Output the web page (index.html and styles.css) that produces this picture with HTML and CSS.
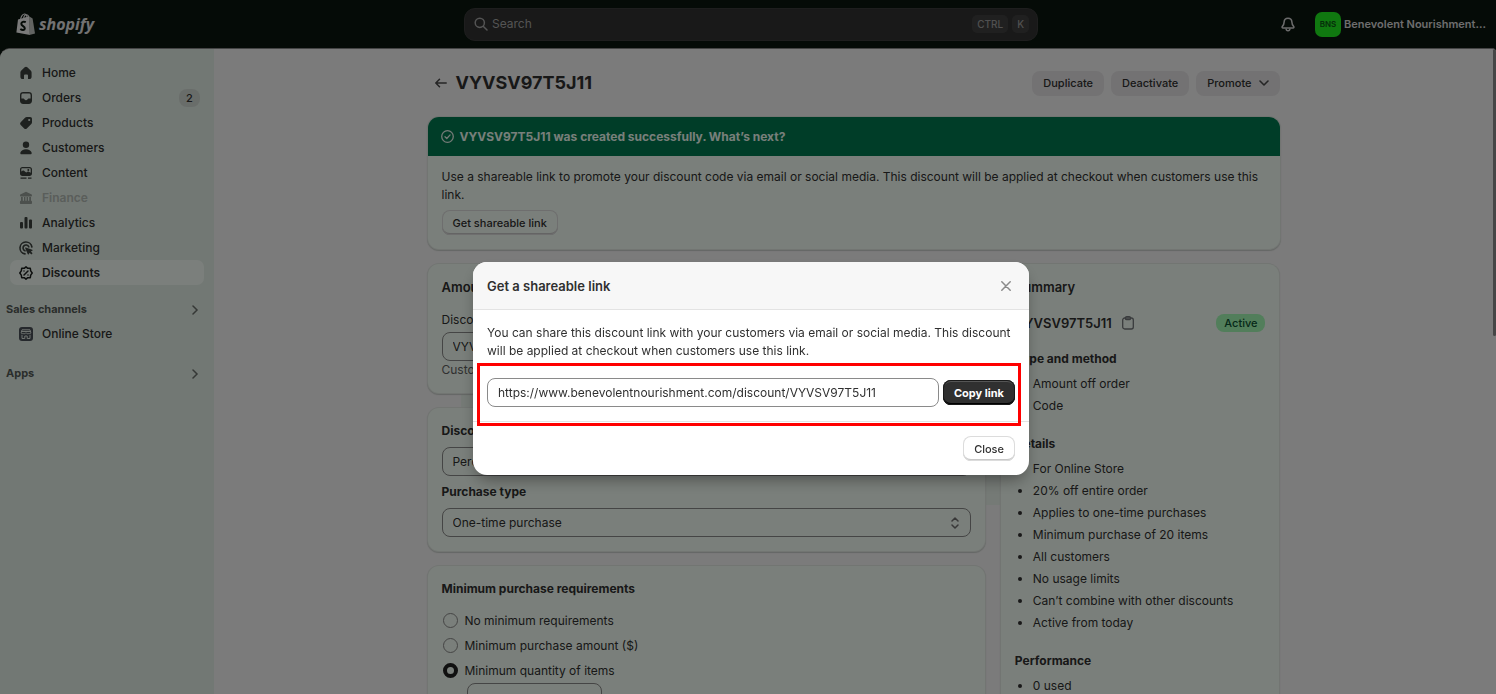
FILE: index.html
```html
<!DOCTYPE html>
<html lang="en">
<head>
  <meta charset="UTF-8">
  <meta name="viewport" content="width=device-width, initial-scale=1.0">
  <title>VYVSV97T5J11 - Discounts</title>
  <link rel="stylesheet" href="styles.css">
</head>
<body>
  <header class="topbar">
    <a class="logo" href="#">
      <svg width="20" height="23" viewBox="0 0 20 23">
        <path d="M2 6.4 13 3.2 14 22 .4 19.6z" fill="#f4f4f4"/>
        <path d="M13 3.2 16.6 5.6 19 20.4 13.4 22z" fill="#c4c8c4"/>
        <path d="M4.6 6.4C5 3 7 .8 8.8 1c1.800.2 2.200 2.200 2.200 4M7.600 5.400C8 3 9.600 1.600 10.800 1.800c1 .2 1.700 1 1.900 2" fill="none" stroke="#f4f4f4" stroke-width="1.100"/>
        <path d="M9.800 9.200C7.800 8.200 5.400 8.800 5.300 10.800c0 2.400 3.600 2.400 3.500 4.700-.1 1.800-2.500 2-4.500.5" fill="none" stroke="#0b160f" stroke-width="2"/>
      </svg>
      <span class="logo-text">shopify</span>
    </a>
    <label class="search">
      <svg width="14" height="14" viewBox="0 0 14 14" fill="none" stroke="#a8a8a8" stroke-width="1.500" stroke-linecap="round"><circle cx="5.800" cy="5.800" r="4.600"/><path d="M9.200 9.200 13 13"/></svg>
      <input type="search" placeholder="Search" aria-label="Search">
      <kbd>CTRL</kbd>
      <kbd>K</kbd>
    </label>
    <div class="account">
      <button class="bell" aria-label="Notifications">
        <svg width="14" height="15" viewBox="0 0 14 15" fill="none" stroke="#d8d8d8" stroke-width="1.500" stroke-linejoin="round"><path d="M7 1.200c2.400 0 3.800 1.700 3.900 3.900.1 2.500.5 3.200 1.700 4.300.7.700.3 1.600-.6 1.600H2c-.9 0-1.300-.9-.6-1.600 1.200-1.100 1.600-1.800 1.700-4.300C3.200 2.900 4.600 1.200 7 1.200z"/><path d="M5 11.500c.1 1.300.9 2.200 2 2.200s1.900-.9 2-2.200"/></svg>
      </button>
      <button class="store"><span class="avatar">BNS</span><span>Benevolent Nourishment…</span></button>
    </div>
  </header>

  <div class="frame">
    <nav class="sidebar">
      <a class="nav-item" href="#">
        <svg width="14" height="14" viewBox="0 0 14 14"><path d="M7 .8c.5 0 .9.200 1.300.5l3.400 3.100c.6.500.9 1.200.9 2v4.300c0 1.400-.9 2.300-2.300 2.300H9V9.500c0-.5-.4-.9-.9-.9H5.900c-.5 0-.9.4-.9.9V13H3.700c-1.400 0-2.300-.9-2.300-2.300V6.400c0-.8.300-1.500.9-2l3.400-3.100c.4-.3.800-.5 1.300-.5z"/></svg>
        Home
      </a>
      <a class="nav-item" href="#">
        <svg width="14" height="14" viewBox="0 0 14 14"><path fill-rule="evenodd" d="M4.200 1h5.600c2 0 3.200 1.200 3.200 3.200v5.600c0 2-1.200 3.200-3.200 3.200H4.200c-2 0-3.200-1.200-3.200-3.200V4.200C1 2.200 2.200 1 4.200 1zm0 1.400c-1.200 0-1.800.6-1.800 1.800v3.300h2c.5 0 .8.300 1 .7.300.6.8 1 1.600 1s1.300-.4 1.600-1c.2-.4.500-.7 1-.7h2V4.200c0-1.200-.6-1.800-1.800-1.800z"/></svg>
        Orders
        <span class="count">2</span>
      </a>
      <a class="nav-item" href="#">
        <svg width="14" height="14" viewBox="0 0 14 14"><path fill-rule="evenodd" d="M7.800 1.100h3.300c1.200 0 1.900.7 1.900 1.900v3.200c0 .7-.3 1.300-.7 1.800l-4.500 4.400c-.8.8-1.800.8-2.600 0L1.700 8.900c-.8-.8-.8-1.800 0-2.600L6 1.800c.5-.5 1.100-.7 1.800-.7zm2.400 4a1.100 1.100 0 1 0 0-2.200 1.100 1.100 0 0 0 0 2.200z"/></svg>
        Products
      </a>
      <a class="nav-item" href="#">
        <svg width="14" height="14" viewBox="0 0 14 14"><circle cx="7" cy="3.800" r="3.200"/><path d="M7 8.200c2.700 0 5 1.300 5.700 3.500.2.800-.3 1.500-1.200 1.500h-9c-.9 0-1.400-.7-1.200-1.500C2 9.500 4.300 8.200 7 8.200z"/></svg>
        Customers
      </a>
      <a class="nav-item" href="#">
        <svg width="14" height="14" viewBox="0 0 14 14"><path fill-rule="evenodd" d="M3.500 1h7C12.100 1 13 1.900 13 3.500v4c0 1.600-.9 2.500-2.500 2.500h-7C1.900 10 1 9.100 1 7.500v-4C1 1.900 1.900 1 3.500 1zm0 1.300c-.8 0-1.200.4-1.200 1.200v2l1.200-.8c.5-.3 1-.3 1.500.1L7.200 6.500l1.300-.8c.4-.3.900-.3 1.300 0l1.900 1.100V3.500c0-.8-.4-1.200-1.200-1.200z"/><circle cx="9.300" cy="4" r="1"/><path d="M1.500 11.400h6v1.400h-6zM9 11.400h3.500v1.400H9z"/></svg>
        Content
      </a>
      <a class="nav-item disabled" href="#">
        <svg width="14" height="14" viewBox="0 0 14 14"><path d="M7 .8 12.700 3.500c.6.300.3 2-.5 2H1.800c-.8 0-1.100-1.700-.5-2zM2 6h1.800v4H2zM5 6h1.400v4H5zM7.600 6H9v4H7.600zM10.200 6H12v4h-1.800zM1.500 9.800h11c.6 0 .8 3.200 0 3.200h-11c-.8 0-.6-3.200 0-3.200z"/></svg>
        Finance
      </a>
      <a class="nav-item" href="#">
        <svg width="14" height="14" viewBox="0 0 14 14"><rect x="1" y="6" width="3" height="6.500" rx="1"/><rect x="5.500" y="1" width="3" height="11.500" rx="1"/><rect x="10" y="3.500" width="3" height="9" rx="1"/></svg>
        Analytics
      </a>
      <a class="nav-item" href="#">
        <svg width="14" height="14" viewBox="0 0 14 14"><path d="M12.900 6A6 6 0 1 0 6 12.900M9.800 5.800A3 3 0 1 0 6 9.800" fill="none" stroke="#3c423e" stroke-width="1.600" stroke-linecap="round"/><path d="m6.700 6.400 6.500 2.300c.6.300.5.900 0 1.100l-1.300.7 1.700 1.700-1.300 1.300-1.700-1.700-.8 1.400c-.3.500-.9.500-1.100-.1L6.100 7c-.1-.4.2-.7.600-.6z"/></svg>
        Marketing
      </a>
      <a class="nav-item selected" href="#">
        <svg width="14" height="14" viewBox="0 0 14 14" fill="none" stroke="#1c1f1d" stroke-width="1.500" stroke-linecap="round" stroke-linejoin="round"><path d="M7 .8 8.800 2.300 11.300 2.300 11.700 4.900 13.200 7 11.700 9.100 11.300 11.700 8.800 11.700 7 13.200 5.200 11.700 2.700 11.700 2.300 9.100.8 7 2.300 4.900 2.700 2.300 5.200 2.300z"/><path d="M9 5 5 9M5 5v.1M9 9v.1"/></svg>
        Discounts
      </a>
      <a class="nav-heading" href="#">Sales channels
        <svg width="10" height="10" viewBox="0 0 10 10"><path d="m3 1 4 4-4 4"/></svg>
      </a>
      <a class="nav-item" href="#">
        <svg width="14" height="14" viewBox="0 0 14 14"><rect width="14" height="14" rx="3" fill="#4a5058"/><path d="M3 2.800h8l.8 3c0 .9-1.200 1.200-1.600.3-.5 1-2.100 1-2.500 0h-1.400c-.4 1-2 1-2.500 0-.4.9-1.600.6-1.600-.3zM3 7.800v3.700h2.800V9h2.400v2.500H11V7.800M2.500 4.500h9" fill="none" stroke="#dfe6e1"/></svg>
        Online Store
      </a>
      <a class="nav-heading apps" href="#">Apps
        <svg width="10" height="10" viewBox="0 0 10 10"><path d="m3 1 4 4-4 4"/></svg>
      </a>
    </nav>

    <main class="main">
      <div class="page">
        <div class="page-header">
          <a class="back" href="#" aria-label="Discounts">
            <svg width="12" height="10" viewBox="0 0 12 10" fill="none" stroke="#4a4a4a" stroke-width="1.500" stroke-linecap="round" stroke-linejoin="round"><path d="M11.200 5H1M4.500 1.200.8 5l3.700 3.800"/></svg>
          </a>
          <h1>VYVSV97T5J11</h1>
          <button class="action">Duplicate</button>
          <button class="action">Deactivate</button>
          <button class="action">Promote
            <svg width="10" height="6" viewBox="0 0 10 6" fill="none" stroke="#4a4a4a" stroke-width="1.600" stroke-linecap="round" stroke-linejoin="round"><path d="m1 1 4 4 4-4"/></svg>
          </button>
        </div>

        <section class="banner">
          <h2 class="banner-title">
            <svg width="13" height="13" viewBox="0 0 13 13" fill="none" stroke="#e8f5ee" stroke-width="1.300" stroke-linecap="round" stroke-linejoin="round"><circle cx="6.500" cy="6.500" r="5.800"/><path d="m4 6.700 1.800 1.800 3.300-3.600"/></svg>
            VYVSV97T5J11 was created successfully. What’s next?
          </h2>
          <div class="banner-body">
            <p>Use a shareable link to promote your discount code via email or social media. This discount will be applied at checkout when customers use this link.</p>
            <button class="button">Get shareable link</button>
          </div>
        </section>

        <div class="columns">
          <div class="column">
            <section class="card">
              <h2>Amount off order</h2>
              <label for="code">Discount code</label>
              <input class="field" type="text" id="code" value="VYVSV97T5J11">
              <p class="help">Customers must enter this code at checkout.</p>
            </section>

            <section class="card value-card">
              <h3><label for="value">Discount value</label></h3>
              <div class="select">
                <select class="field" id="value"><option>Percentage</option></select>
                <svg width="8" height="12" viewBox="0 0 8 12"><path d="M1 4 4 1l3 3M1 8l3 3 3-3"/></svg>
              </div>
              <h3><label for="type">Purchase type</label></h3>
              <div class="select">
                <select class="field" id="type"><option>One-time purchase</option></select>
                <svg width="8" height="12" viewBox="0 0 8 12"><path d="M1 4 4 1l3 3M1 8l3 3 3-3"/></svg>
              </div>
            </section>

            <section class="card minimum-card">
              <h3>Minimum purchase requirements</h3>
              <label class="choice"><input type="radio" name="minimum">No minimum requirements</label>
              <label class="choice"><input type="radio" name="minimum">Minimum purchase amount ($)</label>
              <label class="choice"><input type="radio" name="minimum" checked>Minimum quantity of items</label>
              <input class="field quantity" type="text" aria-label="Minimum quantity">
            </section>
          </div>

          <aside class="card summary">
            <h2>Summary</h2>
            <div class="summary-code">
              <strong>VYVSV97T5J11</strong>
              <button class="copy-icon" aria-label="Copy">
                <svg width="12" height="14" viewBox="0 0 12 14" fill="none" stroke="#73777a" stroke-width="1.300"><rect x=".7" y="2" width="10.600" height="11" rx="2"/><rect x="3.500" y=".7" width="5" height="3" rx="1.200"/></svg>
              </button>
              <span class="badge">Active</span>
            </div>
            <h3>Type and method</h3>
            <ul>
              <li>Amount off order</li>
              <li>Code</li>
            </ul>
            <h3>Details</h3>
            <ul>
              <li>For Online Store</li>
              <li>20% off entire order</li>
              <li>Applies to one-time purchases</li>
              <li>Minimum purchase of 20 items</li>
              <li>All customers</li>
              <li>No usage limits</li>
              <li>Can’t combine with other discounts</li>
              <li>Active from today</li>
            </ul>
            <h3>Performance</h3>
            <ul>
              <li>0 used</li>
            </ul>
          </aside>
        </div>
      </div>
      <div class="scrollbar"></div>
    </main>
  </div>

  <div class="overlay">
    <div class="modal" role="dialog" aria-labelledby="modal-title">
      <div class="modal-header">
        <h2 id="modal-title">Get a shareable link</h2>
        <button class="close-icon" aria-label="Close">
          <svg width="10" height="10" viewBox="0 0 10 10" fill="none" stroke="#8a8a8a" stroke-width="1.500" stroke-linecap="round"><path d="m.8.8 8.400 8.400M9.200.8.8 9.200"/></svg>
        </button>
      </div>
      <div class="modal-body">
        <p>You can share this discount link with your customers via email or social media. This discount will be applied at checkout when customers use this link.</p>
        <div class="share">
          <input class="field" type="text" aria-label="Shareable link" value="https://www.benevolentnourishment.com/discount/VYVSV97T5J11">
          <button class="button primary">Copy link</button>
          <div class="highlight"></div>
        </div>
      </div>
      <div class="modal-footer">
        <button class="button">Close</button>
      </div>
    </div>
  </div>
</body>
</html>
```

FILE: styles.css
```css
* {
  box-sizing: border-box;
}

body {
  margin: 0;
  height: 100vh;
  overflow: hidden;
  display: flex;
  flex-direction: column;
  background: #0b160f;
  color: #303030;
  font-family: Inter, "Liberation Sans", sans-serif;
  font-size: 12px;
  line-height: 18px;
}

h1, h2, h3, p, ul {
  margin: 0;
}

h2 {
  font-size: 13px;
  font-weight: 600;
}

h3 {
  font-size: 12px;
  font-weight: 700;
}

a {
  color: inherit;
  text-decoration: none;
}

button, input, select {
  font: inherit;
  color: inherit;
}

button {
  padding: 0;
  border: none;
  background: none;
}

svg {
  display: block;
  flex: none;
}

/* top bar */
.topbar {
  flex: none;
  display: grid;
  grid-template-columns: 1fr 574px 1fr;
  align-items: center;
  height: 48px;
  padding: 0 10px 0 16px;
}

.logo {
  display: flex;
  align-items: center;
  gap: 3px;
}

.logo-text {
  color: #e4e4e4;
  font-family: "Open Sans", sans-serif;
  font-size: 16px;
  font-style: italic;
  font-weight: 700;
}

.search {
  display: flex;
  align-items: center;
  gap: 4px;
  height: 33px;
  padding: 0 8px 0 9px;
  border: 1px solid #3c3c3c;
  border-radius: 11px;
  background: #323232;
}

.search input {
  flex: 1;
  min-width: 0;
  padding: 0;
  border: none;
  background: none;
}

.search input::placeholder {
  color: #a8a8a8;
}

.search kbd {
  padding: 0 5px;
  border-radius: 5px;
  background: #404040;
  color: #a0a0a0;
  font-family: inherit;
  font-size: 10px;
  font-weight: 500;
}

.account {
  display: flex;
  align-items: center;
  justify-content: flex-end;
  gap: 20px;
}

.store {
  display: flex;
  align-items: center;
  gap: 3px;
  color: #dcdcdc;
  font-size: 11px;
  font-weight: 600;
  white-space: nowrap;
}

.avatar {
  width: 26px;
  border-radius: 7px;
  background: #20f020;
  color: #0b5a14;
  font-size: 8px;
  line-height: 25px;
}

.frame {
  flex: 1;
  min-height: 0;
  display: flex;
  overflow: hidden;
  border-top: 1px solid #8a8a8a;
  border-radius: 10px 4px 0 0;
  background: #f7f6f7;
}

/* side navigation */
.sidebar {
  flex: none;
  width: 214px;
  padding: 11px 10px;
  background: #e5f0e8;
  font-weight: 500;
}

.nav-item {
  display: flex;
  align-items: center;
  gap: 9px;
  height: 25px;
  padding: 0 4px 0 9px;
  border-radius: 7px;
}

.nav-item svg {
  fill: #3c423e;
}

.nav-item.disabled {
  color: #b4bcb6;
  font-weight: 600;
}

.nav-item.disabled svg {
  fill: #98a09a;
}

.nav-item.selected {
  background: #f6fff8;
  font-weight: 600;
}

.nav-item.selected svg {
  fill: none;
}

.count {
  margin-left: auto;
  width: 21px;
  border-radius: 8px;
  background: #d3dbd5;
  font-size: 11px;
  text-align: center;
}

.nav-heading {
  display: flex;
  justify-content: space-between;
  align-items: center;
  height: 25px;
  margin: 11px 4px 0 -4px;
  color: #545a56;
  font-size: 11px;
  font-weight: 700;
}

.nav-heading.apps {
  margin-top: 14px;
}

.nav-heading svg {
  margin-top: 3px;
  fill: none;
  stroke: #6a706c;
  stroke-width: 1.5;
  stroke-linecap: round;
}

/* page */
.main {
  flex: 1;
  min-width: 0;
  display: flex;
  overflow: hidden;
}

.page {
  flex: 1;
  max-width: 852px;
  margin: 0 auto;
}

.scrollbar {
  flex: none;
  width: 3px;
  height: 287px;
  border-radius: 2px;
  background: #8c8c8c;
}

.page-header {
  display: flex;
  align-items: center;
  gap: 7px;
  height: 26px;
  margin: 21px 0;
}

.back {
  padding: 0 2px 0 7px;
}

.page-header h1 {
  margin-right: auto;
  font-size: 18px;
  font-weight: 700;
}

.action {
  display: flex;
  align-items: center;
  gap: 7px;
  height: 25px;
  padding: 0 11px;
  border-radius: 8px;
  background: #e6e5e6;
  font-size: 11px;
  font-weight: 500;
}

.banner, .card {
  border-radius: 11px;
  background: #f5fff6;
  box-shadow: 0 0 0 1px #e4eae5, 0 1px 1px 1px #c8cec9;
}

.banner {
  overflow: hidden;
}

.banner-title {
  display: flex;
  align-items: center;
  gap: 6px;
  height: 39px;
  padding: 0 13px;
  background: #007a50;
  color: #f0fff6;
  font-size: 12px;
  font-weight: 700;
}

.banner-body {
  padding: 12px 14px 14px;
}

.button {
  height: 25px;
  padding: 0 11px;
  border-radius: 8px;
  box-shadow: inset 0 0 0 1px #dcdcdc, inset 0 -2px 0 #c8c8c8;
  font-size: 11px;
  font-weight: 500;
}

.banner-body .button {
  margin-top: 6px;
}

.columns {
  position: relative;
  z-index: 0;
  display: grid;
  grid-template-columns: 2fr 1fr;
  gap: 16px;
  align-items: start;
  margin-top: 15px;
}

/* tinted patch behind the cards */
.columns::before {
  content: "";
  position: absolute;
  z-index: -1;
  top: 128px;
  right: 260px;
  left: 33px;
  height: 113px;
  background: #eaf4ec;
}

.column {
  display: grid;
  gap: 15px;
}

.card {
  display: flex;
  flex-direction: column;
  padding: 14px;
}

.card h2 {
  margin-bottom: 15px;
}

.field {
  width: 100%;
  min-width: 0;
  height: 29px;
  padding: 0 10px;
  border: 1px solid #8a8a8a;
  border-radius: 8px;
  background: none;
}

.card .field {
  margin: 3px 0 0;
}

.help {
  color: #616161;
}

.select {
  position: relative;
  margin-bottom: 7px;
}

.select select {
  appearance: none;
}

.select svg {
  position: absolute;
  right: 12px;
  bottom: 8px;
  fill: none;
  stroke: #707070;
  stroke-width: 1.5;
  stroke-linecap: round;
  stroke-linejoin: round;
}

.value-card .field {
  margin-top: 7px;
}

.value-card .select:last-child {
  margin-bottom: 0;
}

.minimum-card h3 {
  margin-bottom: 10px;
}

.choice {
  display: flex;
  align-items: center;
  gap: 7px;
  height: 25px;
}

.choice input {
  appearance: none;
  width: 15px;
  height: 15px;
  margin: 0 0 0 1px;
  border: 1px solid #8a8a8a;
  border-radius: 50%;
}

.choice input:checked {
  border: 4px solid #202020;
}

.minimum-card .quantity {
  width: 135px;
  margin: 0 0 0 25px;
}

/* summary */
.summary-code {
  display: flex;
  align-items: center;
  gap: 10px;
  margin: 3px 0 18px;
}

.summary-code strong {
  font-size: 13px;
  font-weight: 600;
}

.badge {
  margin-left: auto;
  padding: 0 8px;
  border-radius: 8px;
  background: #a4fcb6;
  color: #0c5132;
  font-size: 11px;
  font-weight: 500;
}

.summary ul {
  display: grid;
  gap: 4px;
  margin: 7px 0 20px;
  padding-left: 18px;
}

/* modal */
.overlay {
  position: fixed;
  inset: 0;
  padding: 262px 0 0 6px;
  background: rgba(0, 0, 0, 0.5);
}

.modal {
  width: 556px;
  max-width: 100%;
  margin: 0 auto;
  border-radius: 14px;
  background: #fff;
  box-shadow: 0 8px 16px -4px rgba(0, 0, 0, 0.4);
}

.modal-header {
  display: flex;
  align-items: center;
  justify-content: space-between;
  height: 48px;
  padding: 0 18px 0 14px;
  border-bottom: 1px solid #e3e3e3;
  border-radius: 14px 14px 0 0;
  background: #f7f7f7;
}

.modal-body {
  padding: 14px;
}

.share {
  position: relative;
  display: flex;
  align-items: center;
  gap: 4px;
  margin-top: 18px;
}

.primary {
  flex: none;
  background: #303030;
  box-shadow: inset 0 0 0 1px #1a1a1a, inset 0 2px 0 #555, inset 0 -2px 0 #000;
  color: #fff;
  font-weight: 700;
}

.highlight {
  position: absolute;
  inset: -15px -6px -19px -10px;
  border: 3px solid #f00;
  pointer-events: none;
}

.modal-footer {
  display: flex;
  justify-content: flex-end;
  padding: 14px;
  border-top: 1px solid #e3e3e3;
}
```
